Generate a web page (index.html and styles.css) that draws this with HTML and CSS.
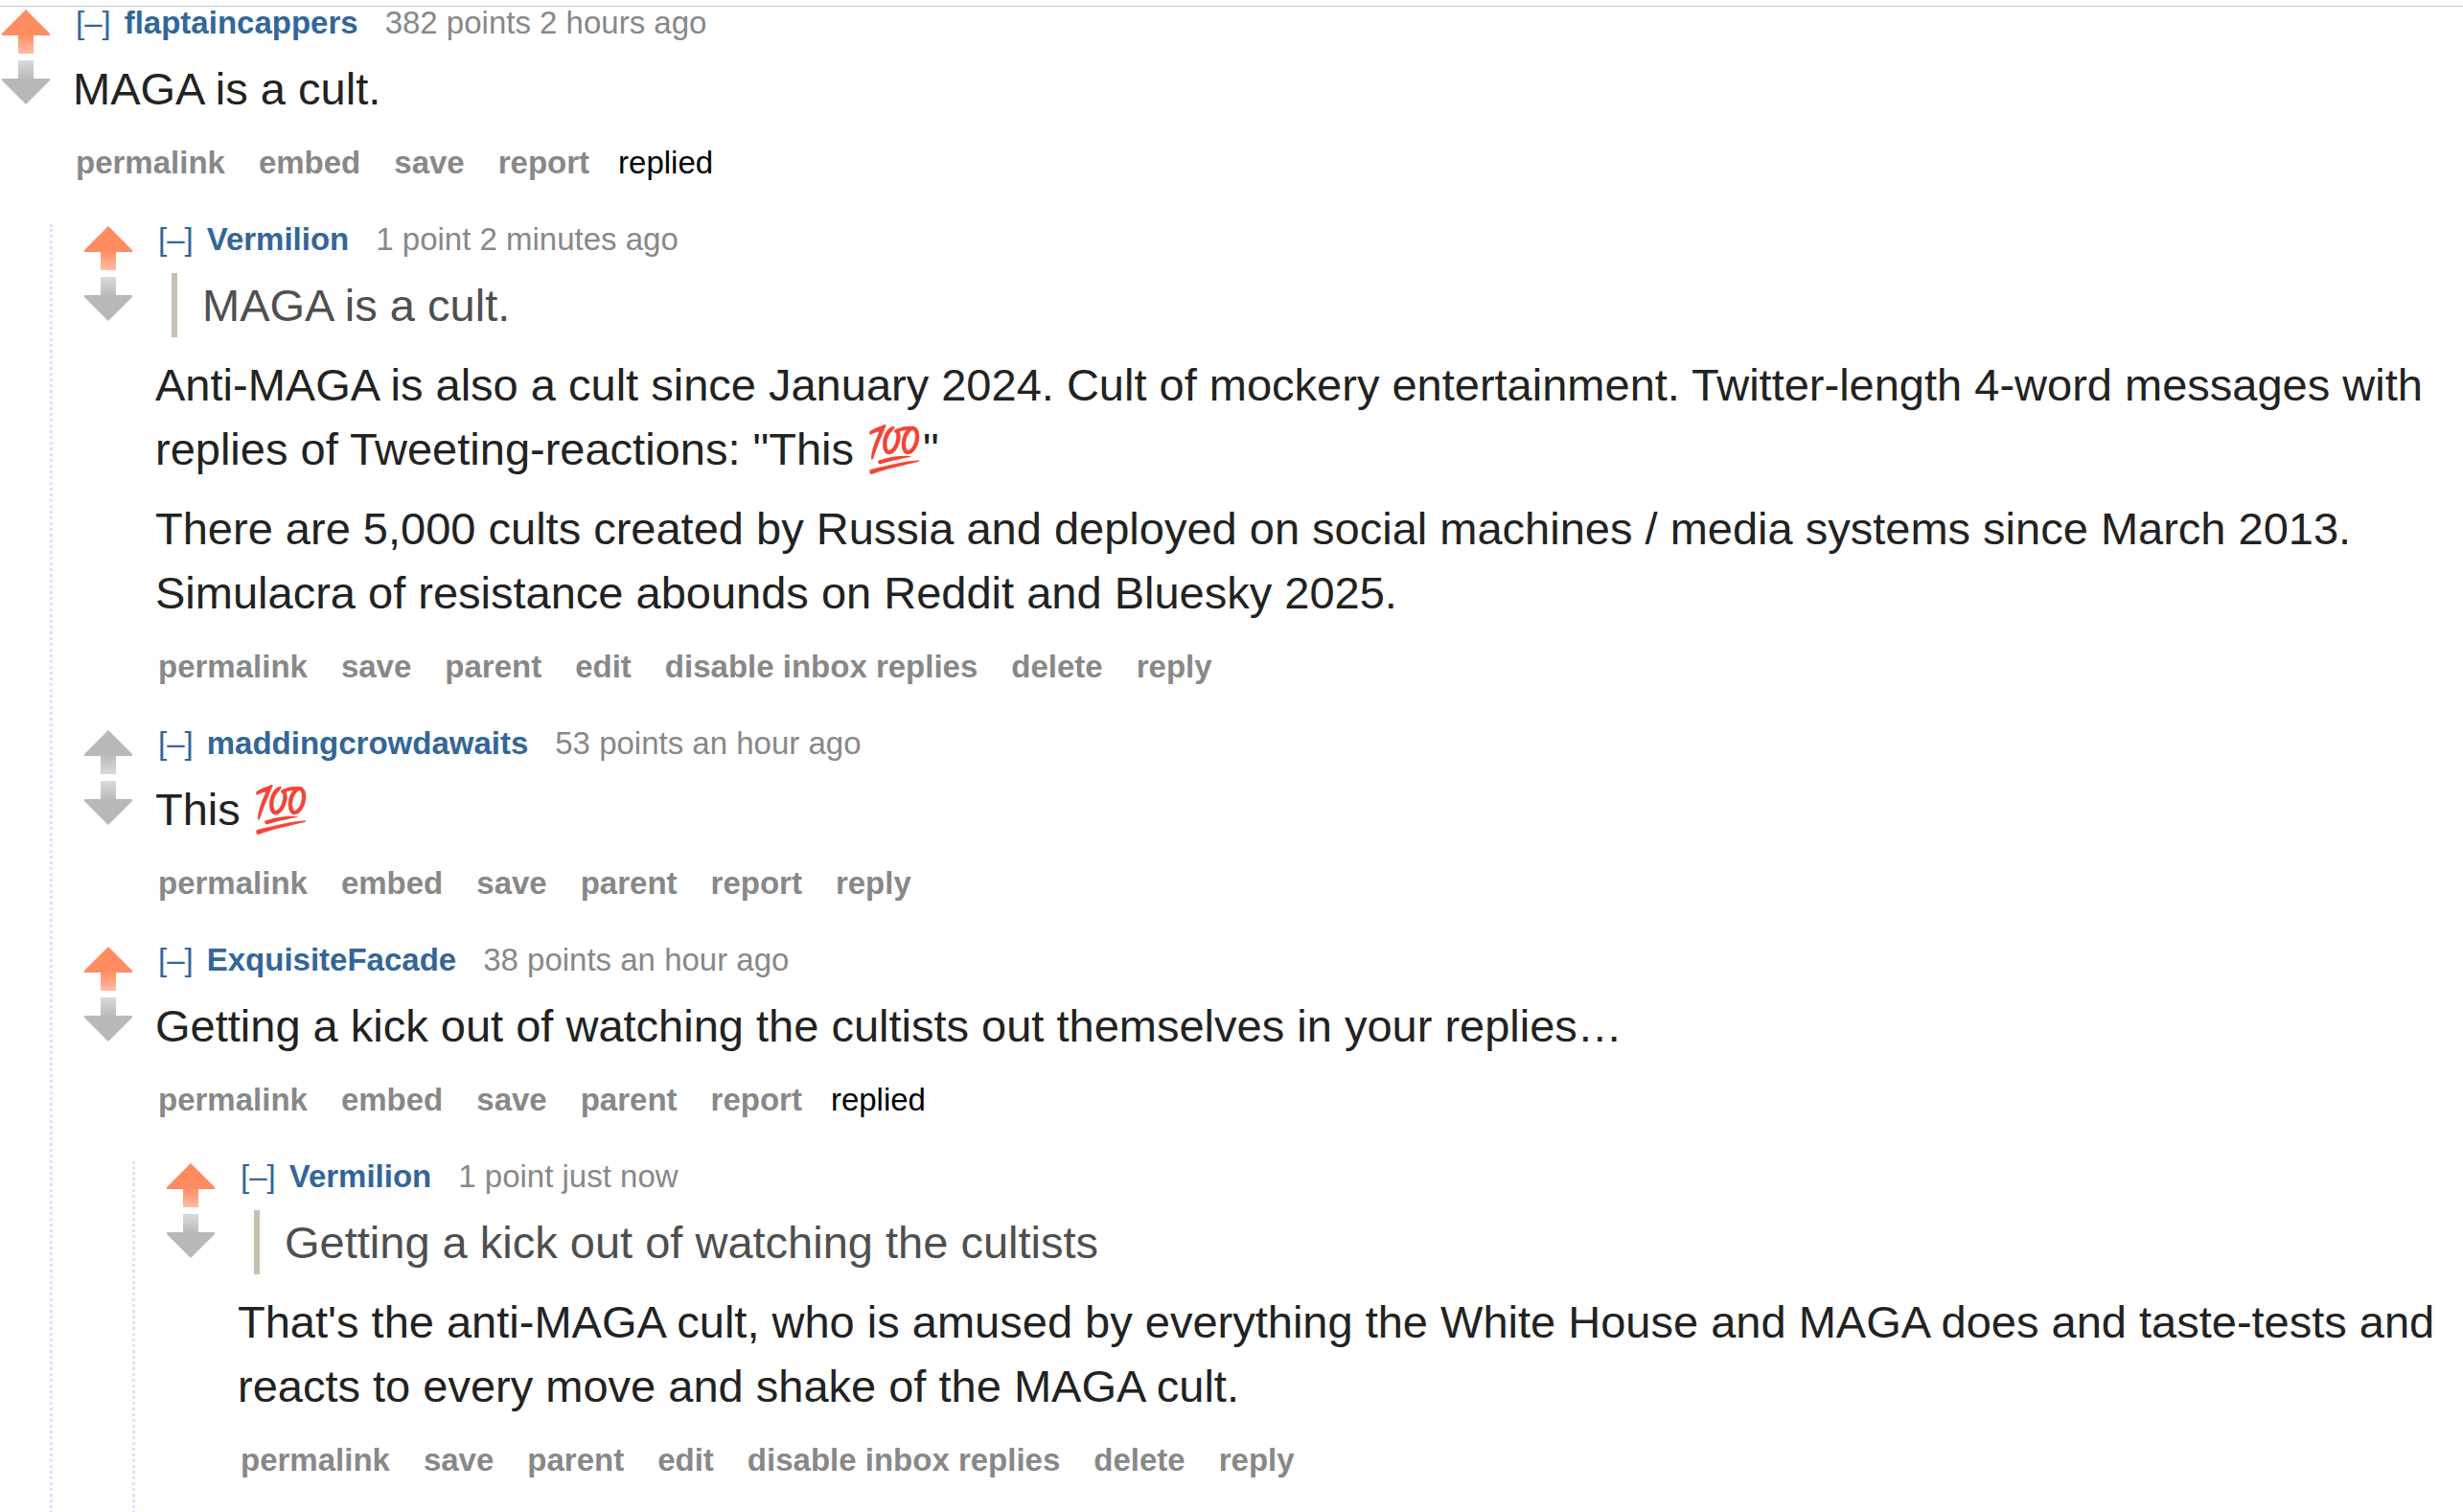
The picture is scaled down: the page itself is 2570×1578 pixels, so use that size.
FILE: index.html
```
<!DOCTYPE html>
<html lang="en">

<head>
    <meta charset="UTF-8">
    <title>Comments</title>
    <link rel="stylesheet" href="styles.css">
</head>

<body>
    <!-- shared arrow shapes -->
    <svg class="defs" width="0" height="0" aria-hidden="true">
        <defs>
            <linearGradient id="orange" x1="0" y1="0" x2="0" y2="1">
                <stop offset="0.55" stop-color="#ff8b60" />
                <stop offset="1" stop-color="#ffbda4" />
            </linearGradient>
            <linearGradient id="gray" x1="0" y1="0" x2="0" y2="1">
                <stop offset="0.55" stop-color="#b8b8b8" />
                <stop offset="1" stop-color="#dadada" />
            </linearGradient>
            <path id="arrow" d="M25 0 L50 25 V27 H33 V46 H17 V27 H0 V25 Z" />
        </defs>
    </svg>

    <main class="thread">
        <article class="comment">
            <div class="votes">
                <button class="up voted" aria-label="upvote"><svg viewBox="0 0 50 46"><use href="#arrow" /></svg></button>
                <button class="down" aria-label="downvote"><svg viewBox="0 0 50 46"><use href="#arrow" /></svg></button>
            </div>
            <div class="entry">
                <p class="tagline"><a href="#" class="expand">[–]</a><a href="#" class="author">flaptaincappers</a><span>382 points 2 hours ago</span></p>
                <div class="md">
                    <p>MAGA is a cult.</p>
                </div>
                <ul class="buttons">
                    <li><a href="#">permalink</a></li>
                    <li><a href="#">embed</a></li>
                    <li><a href="#">save</a></li>
                    <li><a href="#">report</a></li>
                    <li class="replied">replied</li>
                </ul>
            </div>
        </article>

        <div class="child">
            <article class="comment">
                <div class="votes">
                    <button class="up voted" aria-label="upvote"><svg viewBox="0 0 50 46"><use href="#arrow" /></svg></button>
                    <button class="down" aria-label="downvote"><svg viewBox="0 0 50 46"><use href="#arrow" /></svg></button>
                </div>
                <div class="entry">
                    <p class="tagline"><a href="#" class="expand">[–]</a><a href="#" class="author">Vermilion</a><span>1 point 2 minutes ago</span></p>
                    <div class="md">
                        <blockquote>MAGA is a cult.</blockquote>
                        <p>Anti-MAGA is also a cult since January 2024. Cult of mockery entertainment. Twitter-length 4-word messages with replies of Tweeting-reactions: "This 💯"</p>
                        <p>There are 5,000 cults created by Russia and deployed on social machines / media systems since March 2013. Simulacra of resistance abounds on Reddit and Bluesky 2025.</p>
                    </div>
                    <ul class="buttons">
                        <li><a href="#">permalink</a></li>
                        <li><a href="#">save</a></li>
                        <li><a href="#">parent</a></li>
                        <li><a href="#">edit</a></li>
                        <li><a href="#">disable inbox replies</a></li>
                        <li><a href="#">delete</a></li>
                        <li><a href="#">reply</a></li>
                    </ul>
                </div>
            </article>

            <article class="comment">
                <div class="votes">
                    <button class="up" aria-label="upvote"><svg viewBox="0 0 50 46"><use href="#arrow" /></svg></button>
                    <button class="down" aria-label="downvote"><svg viewBox="0 0 50 46"><use href="#arrow" /></svg></button>
                </div>
                <div class="entry">
                    <p class="tagline"><a href="#" class="expand">[–]</a><a href="#" class="author">maddingcrowdawaits</a><span>53 points an hour ago</span></p>
                    <div class="md">
                        <p>This 💯</p>
                    </div>
                    <ul class="buttons">
                        <li><a href="#">permalink</a></li>
                        <li><a href="#">embed</a></li>
                        <li><a href="#">save</a></li>
                        <li><a href="#">parent</a></li>
                        <li><a href="#">report</a></li>
                        <li><a href="#">reply</a></li>
                    </ul>
                </div>
            </article>

            <article class="comment">
                <div class="votes">
                    <button class="up voted" aria-label="upvote"><svg viewBox="0 0 50 46"><use href="#arrow" /></svg></button>
                    <button class="down" aria-label="downvote"><svg viewBox="0 0 50 46"><use href="#arrow" /></svg></button>
                </div>
                <div class="entry">
                    <p class="tagline"><a href="#" class="expand">[–]</a><a href="#" class="author">ExquisiteFacade</a><span>38 points an hour ago</span></p>
                    <div class="md">
                        <p>Getting a kick out of watching the cultists out themselves in your replies…</p>
                    </div>
                    <ul class="buttons">
                        <li><a href="#">permalink</a></li>
                        <li><a href="#">embed</a></li>
                        <li><a href="#">save</a></li>
                        <li><a href="#">parent</a></li>
                        <li><a href="#">report</a></li>
                        <li class="replied">replied</li>
                    </ul>
                </div>
            </article>

            <div class="child">
                <article class="comment">
                    <div class="votes">
                        <button class="up voted" aria-label="upvote"><svg viewBox="0 0 50 46"><use href="#arrow" /></svg></button>
                        <button class="down" aria-label="downvote"><svg viewBox="0 0 50 46"><use href="#arrow" /></svg></button>
                    </div>
                    <div class="entry">
                        <p class="tagline"><a href="#" class="expand">[–]</a><a href="#" class="author">Vermilion</a><span>1 point just now</span></p>
                        <div class="md">
                            <blockquote>Getting a kick out of watching the cultists</blockquote>
                            <p>That's the anti-MAGA cult, who is amused by everything the White House and MAGA does and taste-tests and reacts to every move and shake of the MAGA cult.</p>
                        </div>
                        <ul class="buttons">
                            <li><a href="#">permalink</a></li>
                            <li><a href="#">save</a></li>
                            <li><a href="#">parent</a></li>
                            <li><a href="#">edit</a></li>
                            <li><a href="#">disable inbox replies</a></li>
                            <li><a href="#">delete</a></li>
                            <li><a href="#">reply</a></li>
                        </ul>
                    </div>
                </article>
            </div>
        </div>
    </main>
</body>

</html>
```

FILE: styles.css
```
body {
    margin: 0;
    padding-top: 6px;
    background-color: #fff;
    color: #222;
    font-family: "Liberation Sans", Arial, sans-serif;
}

a {
    color: #369;
    text-decoration: none;
}

p,
ul,
blockquote {
    margin: 0;
    padding: 0;
}

.defs {
    position: absolute;
}

.thread {
    border-top: 1px solid #c6c6c6;
    padding-top: 1px;
}

.comment {
    display: flex;
    gap: 24px;
}

.comment + .comment,
.comment + .child {
    margin-top: 49px;
}

.child {
    margin-left: 52px;
    border-left: 3px dotted #dfdfff;
    padding-left: 31px;
}

.child .child {
    padding-bottom: 40px;
}

/* vote arrows */
.votes {
    display: flex;
    flex-direction: column;
    flex: none;
    gap: 7px;
    padding: 2px 0 0 2px;
}

.votes button {
    width: 50px;
    height: 46px;
    padding: 0;
    border: none;
    background: none;
    cursor: pointer;
}

.votes svg {
    display: block;
    width: 100%;
    height: 100%;
    fill: url(#gray);
}

.votes .voted svg {
    fill: url(#orange);
}

.votes .down svg {
    transform: scaleY(-1);
}

.entry {
    flex: 1;
    min-width: 0;
}

.tagline {
    display: flex;
    margin-bottom: 20px;
    padding-left: 3px;
    color: #888;
    font-size: 33px;
    line-height: 31px;
}

.expand {
    margin-right: 14px;
}

.author {
    margin-right: 28px;
    font-weight: bold;
}

.md {
    font-size: 47px;
    line-height: 67px;
}

.md p + p,
.md blockquote + p {
    margin-top: 16px;
}

.md blockquote {
    margin-left: 17px;
    padding-left: 26px;
    border-left: 6px solid #c5c1ad;
    color: #4f4f4f;
}

.buttons {
    display: flex;
    gap: 35px;
    margin-top: 28px;
    padding-left: 3px;
    list-style: none;
    font-size: 33px;
    font-weight: bold;
    line-height: 31px;
}

.buttons a {
    color: #888;
}

.buttons .replied {
    margin-left: -5px;
    color: #000;
    font-weight: normal;
}
```
